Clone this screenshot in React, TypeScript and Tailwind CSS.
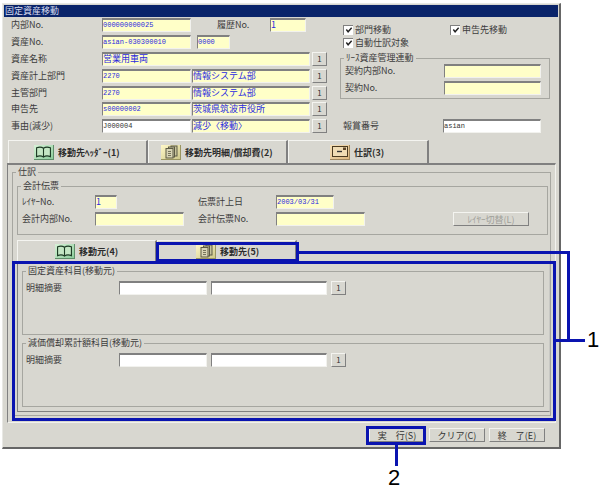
import type { ReactNode } from "react";

const font = { jp: "font-['Noto_Sans_CJK_JP','Liberation_Sans',sans-serif]" };

function Label({ children, className = "" }: { children: ReactNode; className?: string }) {
  return <span className={`text-[9px] leading-[14px] text-[#3c3c3c] whitespace-nowrap ${className}`}>{children}</span>;
}

function Field({
  value = "",
  className = "",
  tone = "yellow",
  mono = false,
}: {
  value?: string;
  className?: string;
  tone?: "yellow" | "white";
  mono?: boolean;
}) {
  const bg = tone === "yellow" ? "bg-[#ffffc8] text-[#2a2ae0]" : "bg-white text-[#333]";
  const type = mono ? "font-['Liberation_Mono'] text-[7px]" : "text-[9px]";
  return (
    <div
      className={`h-[14px] shrink-0 overflow-hidden whitespace-nowrap border-t-2 border-l border-b border-r border-t-[#808080] border-l-[#808080] border-b-[#f2f2ee] border-r-[#f2f2ee] leading-[10px] ${type} ${bg} ${className}`}
    >
      {value}
    </div>
  );
}

function MiniButton({ className = "" }: { className?: string }) {
  return (
    <div className={`flex h-[14px] w-[15px] shrink-0 items-center justify-center border border-t-[#f4f4f0] border-l-[#f4f4f0] border-r-[#808080] border-b-[#808080] text-[8px] leading-none text-[#333] ${className}`}>
      1
    </div>
  );
}

function Check({ label }: { label: string }) {
  return (
    <div className="flex h-[13px] items-center">
      <div className="flex h-[10px] w-[10px] items-center justify-center border-t border-l border-[#808080] bg-white">
        <svg viewBox="0 0 9 9" className="h-[8px] w-[8px]">
          <path d="M1.5 4 L3.5 6.5 L7.5 2" stroke="#222" strokeWidth="1.6" fill="none" />
        </svg>
      </div>
      <Label className="ml-[2px]">{label}</Label>
    </div>
  );
}

function Group({ title, className = "", children }: { title: string; className?: string; children?: ReactNode }) {
  return (
    <fieldset className={`border border-[#a6a6a0] ${className}`}>
      <legend className="ml-[3px] px-[2px] text-[9px] leading-[10px] text-[#3c3c3c]">{title}</legend>
      {children}
    </fieldset>
  );
}

function BookIcon() {
  return (
    <div className="flex h-[15px] w-[20px] items-center justify-center border-r border-b border-[#5f8f6a] bg-gradient-to-br from-[#d8f2d8] to-[#8ccc9c]">
      <svg viewBox="0 0 18 13" className="h-[12px] w-[17px]">
        <path d="M1.5 2 C4 1 7 1 9 2.5 C11 1 14 1 16.5 2 V11.5 C14 10.5 11 10.5 9 12 C7 10.5 4 10.5 1.5 11.5 Z" fill="#c4e6c4" stroke="#1d3a24" strokeWidth="1.2" />
        <path d="M9 2.5 V12" stroke="#1d3a24" strokeWidth="1.2" />
      </svg>
    </div>
  );
}

function DocsIcon() {
  return (
    <div className="flex h-[15px] w-[20px] items-center justify-center border-r border-b border-[#9a9560] bg-gradient-to-br from-[#fff8c8] to-[#cfc98c]">
      <svg viewBox="0 0 16 14" className="h-[14px] w-[16px]">
        <rect x="8" y="1" width="6" height="10" fill="#c8c49c" stroke="#5c5a44" />
        <rect x="5.5" y="2" width="6" height="10" fill="#d0cca8" stroke="#5c5a44" />
        <rect x="3" y="3.5" width="7" height="9.5" fill="#d8d4b4" stroke="#5c5a44" />
        <path d="M5 6.5 H8 M5 8.5 H8 M5 10.5 H8" stroke="#77745c" />
      </svg>
    </div>
  );
}

function MailIcon() {
  return (
    <div className="flex h-[15px] w-[20px] items-center justify-center border-r border-b border-[#a08860] bg-gradient-to-br from-[#f6e2bc] to-[#dcb880]">
      <svg viewBox="0 0 16 11" className="h-[11px] w-[16px]">
        <rect x="0.5" y="0.5" width="15" height="10" fill="#f0dcb4" stroke="#4a3a20" />
        <path d="M5 5.5 H10" stroke="#333" strokeWidth="1.4" />
        <rect x="11" y="1.5" width="3" height="2.5" fill="#5c4428" />
      </svg>
    </div>
  );
}

function Tab({
  icon,
  label,
  className = "",
  pad,
}: {
  icon: ReactNode;
  label: string;
  className?: string;
  pad: string;
}) {
  return (
    <div className={`flex shrink-0 items-center border-t border-l border-r-2 border-t-[#f4f4f0] border-l-[#f4f4f0] border-r-[#808080] ${pad} ${className}`}>
      {icon}
      <span className="ml-[4px] whitespace-nowrap text-[9px] font-bold leading-none text-[#2c2c2c]">{label}</span>
    </div>
  );
}

function BottomButton({ label, className = "" }: { label: string; className?: string }) {
  return (
    <div className={`flex h-[14px] w-[56px] items-center justify-center whitespace-pre border border-t-[#f4f4f0] border-l-[#f4f4f0] border-r-[#808080] border-b-[#808080] text-[9px] leading-none text-[#333] ${className}`}>
      {label}
    </div>
  );
}

function DetailGroup({ title }: { title: string }) {
  return (
    <Group title={title} className="h-[69px] w-[522px]">
      <div className="flex pl-[3px] pt-[5px]">
        <Label className="w-[93px]">明細摘要</Label>
        <Field tone="white" className="w-[88px]" />
        <Field tone="white" className="ml-[4px] w-[116px]" />
        <MiniButton className="ml-[4px]" />
      </div>
    </Group>
  );
}

export default function App() {
  return (
    <div className={`relative h-[495px] w-[611px] overflow-hidden bg-white ${font.jp}`}>
      <div className="ml-[2px] h-[3px]" />
      <div className="ml-[2px] h-[446px] w-[559px] border-t border-l border-r-2 border-b-2 border-t-[#e8e8e4] border-l-[#e8e8e4] border-r-[#666] border-b-[#666] bg-[#d8d7d0] p-[1px]">
        <div className="h-[12px] bg-[#0a246a] pl-[1px] text-[9px] leading-[12px] text-[#d8dcf0]">固定資産移動</div>

        {/* header form */}
        <div className="flex h-[123px] pt-[1px]">
          <div className="flex w-[323px] flex-col">
            <div className="flex h-[14px]">
              <Label className="w-[98px] pl-[7px]">内部No.</Label>
              <Field mono value="000000000025" className="w-[89px]" />
              <Label className="ml-[26px] w-[53px]">履歴No.</Label>
              <Field value="1" className="w-[36px]" />
            </div>
            <div className="mt-[3px] flex h-[14px]">
              <Label className="w-[98px] pl-[7px]">資産No.</Label>
              <Field mono value="asian-030300010" className="w-[89px]" />
              <Field mono value="0000" className="ml-[6px] w-[33px]" />
            </div>
            <div className="mt-[3px] flex h-[14px]">
              <Label className="w-[98px] pl-[7px]">資産名称</Label>
              <Field value="営業用車両" className="w-[208px]" />
              <MiniButton className="ml-[2px]" />
            </div>
            <div className="mt-[3px] flex h-[14px]">
              <Label className="w-[98px] pl-[7px]">資産計上部門</Label>
              <Field mono value="2270" className="w-[89px]" />
              <Field value="情報システム部" className="ml-[1px] w-[118px]" />
              <MiniButton className="ml-[2px]" />
            </div>
            <div className="mt-[3px] flex h-[14px]">
              <Label className="w-[98px] pl-[7px]">主管部門</Label>
              <Field mono value="2270" className="w-[89px]" />
              <Field value="情報システム部" className="ml-[1px] w-[118px]" />
              <MiniButton className="ml-[2px]" />
            </div>
            <div className="mt-[2px] flex h-[14px]">
              <Label className="w-[98px] pl-[7px]">申告先</Label>
              <Field mono value="s00000002" className="w-[89px]" />
              <Field value="茨城県筑波市役所" className="ml-[1px] w-[118px]" />
              <MiniButton className="ml-[2px]" />
            </div>
            <div className="mt-[3px] flex h-[14px]">
              <Label className="w-[98px] pl-[7px]">事由(減少)</Label>
              <Field mono value="J000004" tone="white" className="w-[89px]" />
              <Field value="減少〈移動〉" className="ml-[1px] w-[118px]" />
              <MiniButton className="ml-[2px]" />
            </div>
          </div>

          <div className="flex w-[232px] flex-col pl-[13px]">
            <div className="mt-[5px] flex pl-[3px]">
              <div className="w-[107px]">
                <Check label="部門移動" />
              </div>
              <Check label="申告先移動" />
            </div>
            <div className="pl-[3px]">
              <Check label="自動仕訳対象" />
            </div>
            <Group title="ﾘｰｽ資産管理連動" className="mt-[4px] h-[46px] w-[210px]">
              <div className="mt-[1px] flex h-[14px] pl-[4px]">
                <Label className="w-[99px]">契約内部No.</Label>
                <Field className="w-[97px]" />
              </div>
              <div className="mt-[3px] flex h-[14px] pl-[4px]">
                <Label className="w-[99px]">契約No.</Label>
                <Field className="w-[97px]" />
              </div>
            </Group>
            <div className="mt-[20px] flex h-[14px] pl-[3px]">
              <Label className="w-[100px]">報賞番号</Label>
              <Field mono value="asian" tone="white" className="w-[98px]" />
            </div>
          </div>
        </div>

        {/* main tabs */}
        <div className="ml-[4px] flex h-[23px]">
          <Tab icon={<BookIcon />} label="移動先ﾍｯﾀﾞｰ(1)" pad="pl-[25px]" className="w-[140px]" />
          <Tab icon={<DocsIcon />} label="移動先明細/償却費(2)" pad="pl-[12px]" className="w-[140px]" />
          <Tab icon={<MailIcon />} label="仕訳(3)" pad="pl-[41px]" className="w-[141px]" />
        </div>

        <div className="ml-[3px] h-[260px] w-[549px] border-t-2 border-l border-r border-b border-t-[#808080] border-l-[#808080] border-r-[#f2f2ee] border-b-[#f2f2ee]">
          <Group title="仕訳" className="ml-[4px] mt-[2px] h-[249px] w-[539px]">
            <Group title="会計伝票" className="ml-[4px] mt-[4px] h-[54px] w-[531px]">
              <div className="mt-[4px] flex h-[14px] pl-[4px]">
                <Label className="w-[73px]">ﾚｲﾔｰNo.</Label>
                <Field value="1" className="w-[22px]" />
                <Label className="ml-[81px] w-[78px]">伝票計上日</Label>
                <Field mono value="2003/03/31" className="w-[58px]" />
              </div>
              <div className="mt-[3px] flex h-[14px] pl-[4px]">
                <Label className="w-[73px]">会計内部No.</Label>
                <Field className="w-[89px]" />
                <Label className="ml-[14px] w-[78px]">会計伝票No.</Label>
                <Field className="w-[89px]" />
                <div className="ml-[88px] flex h-[14px] w-[76px] items-center justify-center border border-t-[#f4f4f0] border-l-[#f4f4f0] border-r-[#808080] border-b-[#808080] text-[9px] leading-none text-[#a0a09a]">
                  ﾚｲﾔｰ切替(L)
                </div>
              </div>
            </Group>

            <div className="ml-[4px] mt-[5px] flex h-[21px]">
              <Tab icon={<BookIcon />} label="移動元(4)" pad="pl-[37px]" className="w-[140px]" />
              <Tab icon={<DocsIcon />} label="移動先(5)" pad="pl-[38px]" className="w-[140px]" />
            </div>

            <div className="ml-[4px] h-[151px] w-[533px] border-t border-l border-r border-b border-t-[#f4f4f0] border-l-[#808080] border-r-[#c8c8c4] border-b-[#808080] pl-[4px] pt-[4px]">
              <DetailGroup title="固定資産科目(移動元)" />
              <div className="h-[3px]" />
              <DetailGroup title="減価償却累計額科目(移動元)" />
            </div>
          </Group>
        </div>

        {/* window buttons */}
        <div className="flex justify-end gap-[4px] pr-[13px] pt-[5px]">
          <BottomButton label="実　行(S)" />
          <BottomButton label="クリア(C)" />
          <BottomButton label="終　了(E)" />
        </div>
      </div>

      {/* annotation overlay */}
      <div className="absolute left-[156px] top-[242px] h-[20px] w-[143px] border-[3px] border-[#0a14b0]" />
      <div className="absolute left-[299px] top-[251px] h-[3px] w-[271px] bg-[#0a14b0]" />
      <div className="absolute left-[567px] top-[251px] h-[90px] w-[3px] bg-[#0a14b0]" />
      <div className="absolute left-[12px] top-[261px] h-[160px] w-[544px] border-[3px] border-[#0a14b0]" />
      <div className="absolute left-[555px] top-[339px] h-[3px] w-[30px] bg-[#0a14b0]" />
      <div className="absolute left-[366px] top-[426px] h-[19px] w-[60px] border-[3px] border-[#0a14b0]" />
      <div className="absolute left-[395px] top-[444px] h-[22px] w-[3px] bg-[#0a14b0]" />
      <span className="absolute left-[587px] top-[327px] font-['Liberation_Sans'] text-[22px] leading-[25px] text-black">1</span>
      <span className="absolute left-[388px] top-[465px] font-['Liberation_Sans'] text-[22px] leading-[25px] text-black">2</span>
    </div>
  );
}
